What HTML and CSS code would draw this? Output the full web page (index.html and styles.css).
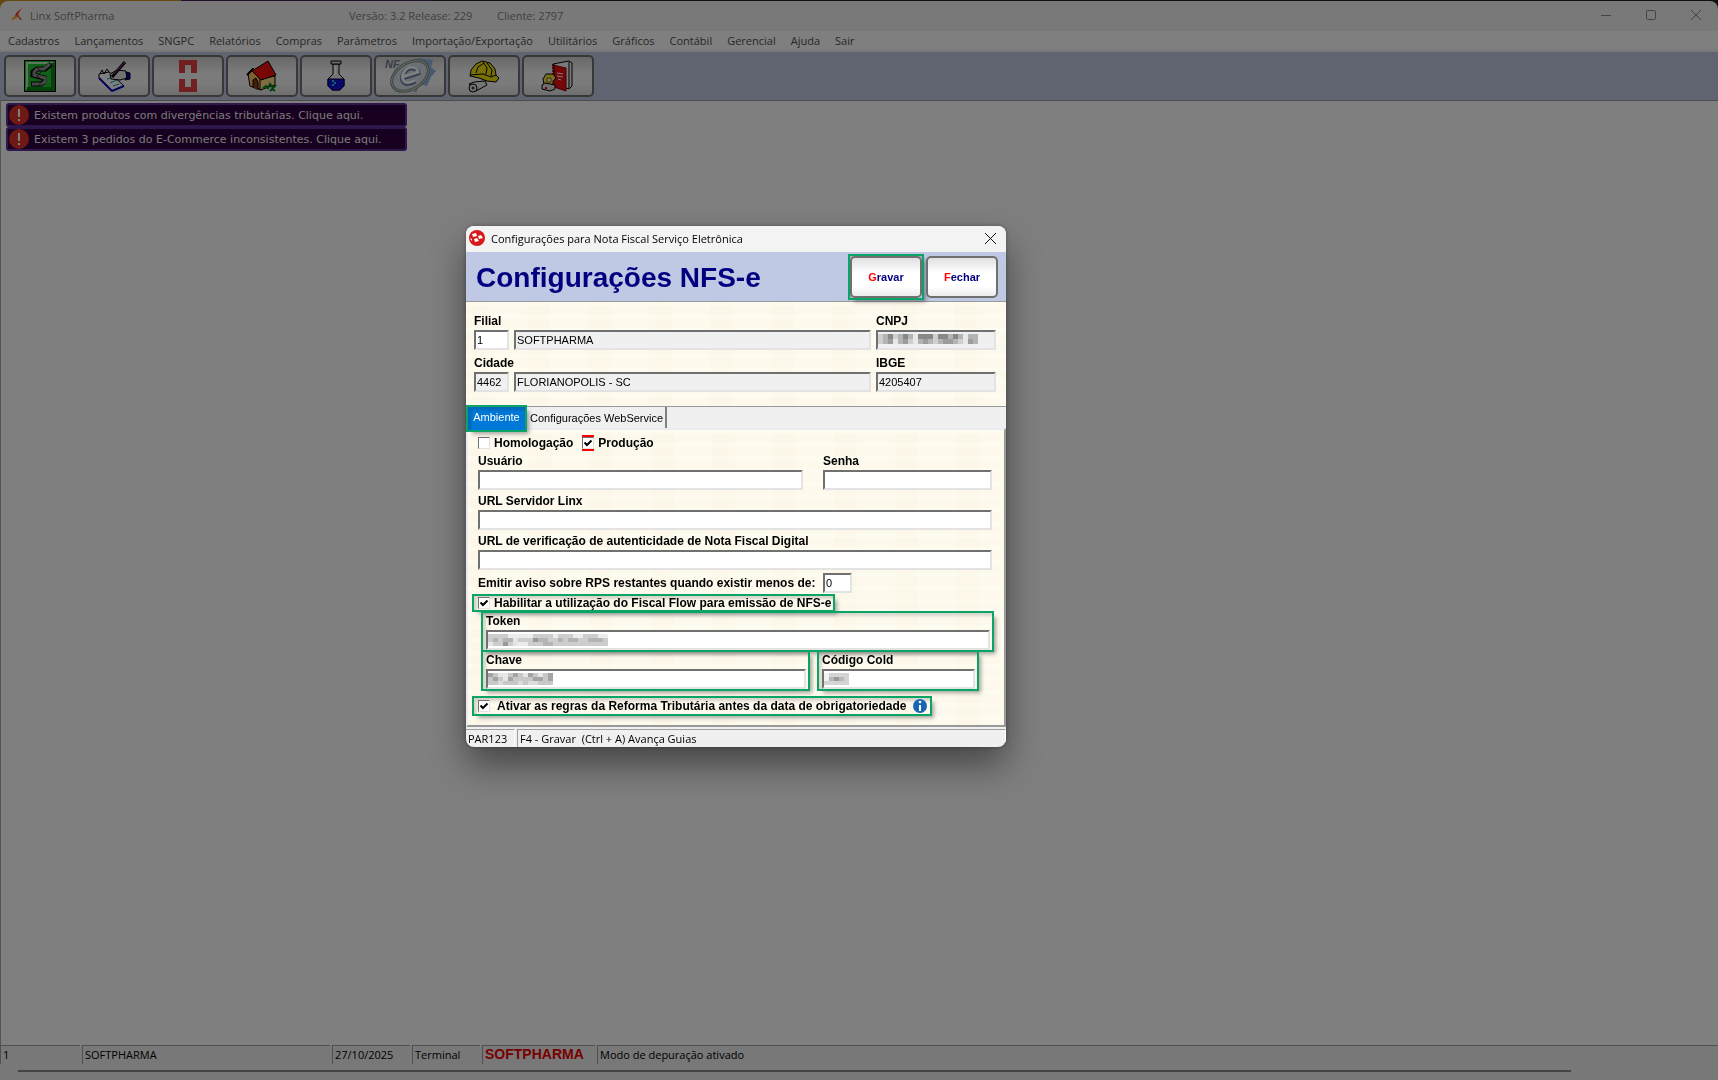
FILE: index.html
```html
<!DOCTYPE html>
<html lang="pt-BR">
<head>
    <meta charset="UTF-8">
    <meta name="viewport" content="width=device-width, initial-scale=1.0">
    <title>Linx SoftPharma</title>
    <link rel="stylesheet" href="styles.css">
</head>
<body>
<div class="app">
    <header class="titlebar">
        <svg class="app-logo" width="12" height="14" viewBox="0 0 12 14"><path d="M11 0L5 5L4 8L0 12L5 10L7 6Z" fill="#f03c14"/><path d="M5 8L7 9L9 12L11 12L8 8L7 5Z" fill="#f0601e"/><path d="M0 12L4 11L6 9L4 8Z" fill="#ffb020"/></svg>
        <span class="app-name">Linx SoftPharma</span>
        <span class="app-version">Versão: 3.2 Release: 229</span>
        <span class="app-client">Cliente: 2797</span>
        <div class="window-buttons">
            <button type="button" aria-label="Minimizar"><svg width="10" height="10" viewBox="0 0 10 10"><path d="M0 5.5H10"/></svg></button>
            <button type="button" aria-label="Maximizar"><svg width="10" height="10" viewBox="0 0 10 10"><rect x=".5" y=".5" width="9" height="9" rx="1"/></svg></button>
            <button type="button" aria-label="Fechar janela"><svg width="10" height="10" viewBox="0 0 10 10"><path d="M0 0L10 10M10 0L0 10"/></svg></button>
        </div>
    </header>

    <nav class="menu">
        <a href="#">Cadastros</a>
        <a href="#">Lançamentos</a>
        <a href="#">SNGPC</a>
        <a href="#">Relatórios</a>
        <a href="#">Compras</a>
        <a href="#">Parâmetros</a>
        <a href="#">Importação/Exportação</a>
        <a href="#">Utilitários</a>
        <a href="#">Gráficos</a>
        <a href="#">Contábil</a>
        <a href="#">Gerencial</a>
        <a href="#">Ajuda</a>
        <a href="#">Sair</a>
    </nav>

    <div class="toolbar">
        <button type="button" aria-label="SoftPharma">
            <svg width="32" height="32" viewBox="0 0 32 32"><rect x=".5" y=".5" width="31" height="31" fill="#20c030" stroke="#000"/><path d="M3 29V3H29" fill="none" stroke="#b8f0b8" stroke-width="2"/><path d="M29 3V29H3" fill="none" stroke="#108018" stroke-width="4"/><path d="M27 4L21 9H13L9 12V15L20 18V22L17 24H7" fill="none" stroke="#000" stroke-width="5"/><path d="M26 4L20 9H13L10 12V15L21 18V22L17 24H8" fill="none" stroke="#909090" stroke-width="3"/><path d="M13 7L17 12L13 16L18 20L15 26" fill="none" stroke="#303030"/></svg>
        </button>
        <button type="button" aria-label="Lançamentos">
            <svg width="34" height="32" viewBox="0 0 34 32"><path d="M2 14L12 12L27 26L15 31L2 18Z" fill="#fff" stroke="#000"/><path d="M2 18L15 31L27 26" fill="none" stroke="#0000b0" stroke-width="2"/><path d="M10 19L14 18M13 23L20 20M16 26L22 24" stroke="#00a0a0"/><path d="M3 14L5 10L7 14L10 9L13 13" fill="none" stroke="#000"/><path d="M13 14L20 10L29 11L30 18L23 20L14 19Z" fill="#e4e4e4" stroke="#000"/><path d="M29 12L33 13V19L28 20L30 17Z" fill="#0000b0" stroke="#000"/><path d="M15 17L28 2" stroke="#000" stroke-width="3"/><path d="M17 14L28 2" stroke="#c040c0"/></svg>
        </button>
        <button type="button" aria-label="SNGPC">
            <svg width="20" height="32" viewBox="0 0 20 32"><path d="M1 0H19V13H13V5H7V13H1Z" fill="#e04040"/><path d="M1 19H7V27H13V19H19V32H1Z" fill="#e04040"/></svg>
        </button>
        <button type="button" aria-label="Início">
            <svg width="32" height="32" viewBox="0 0 32 32"><path d="M2 14L7 8L16 19V30L4 26Z" fill="#ffc060" stroke="#000"/><path d="M14 19L29 16V25L14 30Z" fill="#ffd880" stroke="#000"/><path d="M6 11L22 1L30 15L15 20Z" fill="#f01010" stroke="#000"/><path d="M1 15L7 9" stroke="#000" stroke-width="2"/><path d="M7 28V20L10 18L12 22V30" fill="#804010" stroke="#000"/><path d="M17 28L20 26L22 28L24 24L27 28L30 25M24 31L26 29L29 31" fill="none" stroke="#008020" stroke-width="2"/></svg>
        </button>
        <button type="button" aria-label="Laboratório">
            <svg width="20" height="32" viewBox="0 0 20 32"><path d="M7 4V14L2 19V26L6 30H14L18 26V19L13 14V4Z" fill="#e8e8e8" stroke="#000"/><path d="M2 19H18V26L14 30H6L2 26Z" fill="#1010d0" stroke="#000040"/><path d="M5 1H15V4H5Z" fill="#d0d0d0" stroke="#000"/><path d="M9 6V15" stroke="#fff" stroke-width="2"/><path d="M6 20h2v2h-2zM8 22h2v2h-2zM6 24h2v2h-2z" fill="#30c0e0"/></svg>
        </button>
        <button type="button" aria-label="Nota fiscal eletrônica">
            <svg width="52" height="38" viewBox="0 0 52 38"><path d="M34 1L49 3L47 10L52 14L47 20L43 29L36 27L32 36L26 30L18 34L25 20Z" fill="#90b4e0"/><ellipse cx="26" cy="19" rx="20" ry="13" transform="rotate(-32 26 19)" fill="#d8e0ea" stroke="#788888" stroke-width="3"/><ellipse cx="26" cy="19" rx="20" ry="13" transform="rotate(-32 26 19)" fill="none" stroke="#c8d8c0"/><text x="1" y="11" class="nf-text">NF</text><path d="M18 21L34 16C33 10 24 9 20 16C16 24 21 30 31 24" fill="none" stroke="#7080a8" stroke-width="5"/><path d="M18 20L34 15C33 9 24 8 20 15C16 23 21 29 31 23" fill="none" stroke="#fff" stroke-width="3"/></svg>
        </button>
        <button type="button" aria-label="Obras">
            <svg width="34" height="33" viewBox="0 0 34 33"><path d="M3 16L4 10L9 4L15 1L23 3L28 9L29 15L32 18L29 22L20 21L12 18Z" fill="#f0e010" stroke="#000"/><path d="M3 15L16 14L24 17L29 15M9 13L11 7L17 3M19 14L20 8L16 2M24 16L25 10L20 3" fill="none" stroke="#000"/><path d="M2 24L7 22L18 21L20 25L9 31Z" fill="#e8e8e8" stroke="#000"/><circle cx="6" cy="28" r="4" fill="#e8e8e8" stroke="#000"/><circle cx="6" cy="28" r="1" fill="none" stroke="#000"/></svg>
        </button>
        <button type="button" aria-label="Agenda">
            <svg width="34" height="32" viewBox="0 0 34 32"><path d="M12 4L28 1L31 3V26L28 29L14 24Z" fill="#f4f4f4" stroke="#000"/><path d="M28 2V28" stroke="#000"/><path d="M12 5L25 8V31L13 27Z" fill="#e81010" stroke="#900"/><path d="M16 13L22 14M16 16L22 17M17 19L20 20" stroke="#fff"/><path d="M11 5H14M11 8H14M11 11H14M11 14H14" stroke="#000"/><path d="M2 19L5 14L12 14L15 18L12 21V26L3 24Z" fill="#f0e040" stroke="#000"/><path d="M1 25L4 23L14 25V29L9 31L1 29Z" fill="#ddd" stroke="#000"/><path d="M6 18H10V22H6Z" fill="#fff" stroke="#806000"/><path d="M4 28H6" stroke="#e00" stroke-width="2"/></svg>
        </button>
    </div>

    <main class="workspace">
        <a class="alert" href="#">
            <svg width="20" height="20" viewBox="0 0 20 20"><circle cx="10" cy="10" r="10" fill="#e03028"/><path d="M10 4V12M10 14V16" stroke="#fff" stroke-width="2"/></svg>
            Existem produtos com divergências tributárias. Clique aqui.
        </a>
        <a class="alert" href="#">
            <svg width="20" height="20" viewBox="0 0 20 20"><circle cx="10" cy="10" r="10" fill="#e03028"/><path d="M10 4V12M10 14V16" stroke="#fff" stroke-width="2"/></svg>
            Existem 3 pedidos do E-Commerce inconsistentes. Clique aqui.
        </a>
    </main>

    <footer class="app-status">
        <span>1</span>
        <span>SOFTPHARMA</span>
        <span>27/10/2025</span>
        <span>Terminal</span>
        <span class="brand">SOFTPHARMA</span>
        <span>Modo de depuração ativado</span>
    </footer>
    <div class="scrollbar"><div class="scroll-thumb"></div></div>
</div>

<div class="backdrop"></div>

<form class="dialog" role="dialog" aria-labelledby="dialog-title">
    <div class="dialog-bar">
        <svg width="16" height="16" viewBox="0 0 16 16"><circle cx="8" cy="8" r="8" fill="#d81818"/><path d="M3 4L7 3L8 6L4 7ZM9 6L12 5L14 8L10 9ZM5 9L8 8L10 11L6 12ZM1 8L3 9L3 11L2 10Z" fill="#fff"/></svg>
        <span id="dialog-title">Configurações para Nota Fiscal Serviço Eletrônica</span>
        <button type="button" class="dialog-close" aria-label="Fechar"><svg width="11" height="11" viewBox="0 0 11 11"><path d="M0 0L11 11M11 0L0 11"/></svg></button>
    </div>

    <div class="dialog-head">
        <h1>Configurações NFS-e</h1>
        <div class="action-frame marked"><button type="submit" class="action"><b>G</b>ravar</button></div>
        <button type="button" class="action"><b>F</b>echar</button>
    </div>

    <div class="branch paper">
        <div class="field">
            <label for="filial">Filial</label>
            <input type="text" id="filial" value="1">
        </div>
        <div class="field">
            <input type="text" aria-label="Nome da filial" value="SOFTPHARMA" readonly>
        </div>
        <div class="field">
            <label for="cnpj">CNPJ</label>
            <div class="masked">
                <input type="text" id="cnpj" readonly>
                <svg width="100" height="10" viewBox="0 0 20 2" shape-rendering="crispEdges">
                    <rect width="20" height="2" fill="#b4b4b4"/>
                    <path d="M2 .5h1M5 .5h1M8 .5h3M12 .5h2M15 .5h1" stroke="#888"/>
                    <path d="M2 1.5h1M5 1.5h1M9 1.5h1M13 1.5h2M18 1.5h1" stroke="#9c9c9c"/>
                    <path d="M0 .5h1M3 .5h1M11 .5h1M0 1.5h1M6 1.5h1M11 1.5h1M16 1.5h1" stroke="#cfcfcf"/>
                    <path d="M7 .5h1M17 .5h1M7 1.5h1M3 1.5h1M17 1.5h1" stroke="#e8e8e8"/>
                </svg>
            </div>
        </div>
        <div class="field">
            <label for="cidade">Cidade</label>
            <input type="text" id="cidade" value="4462" readonly>
        </div>
        <div class="field">
            <input type="text" aria-label="Nome da cidade" value="FLORIANOPOLIS - SC" readonly>
        </div>
        <div class="field">
            <label for="ibge">IBGE</label>
            <input type="text" id="ibge" value="4205407" readonly>
        </div>
    </div>

    <div class="tabs" role="tablist">
        <button type="button" role="tab" class="tab active marked" aria-selected="true">Ambiente</button>
        <button type="button" role="tab" class="tab" aria-selected="false">Configurações WebService</button>
    </div>

    <div class="panel paper">
        <div class="checks">
            <input type="checkbox" id="homologacao"><label for="homologacao">Homologação</label>
            <input type="checkbox" id="producao" class="required" checked><label for="producao">Produção</label>
        </div>
        <div class="login">
            <div class="field">
                <label for="usuario">Usuário</label>
                <input type="text" id="usuario">
            </div>
            <div class="field">
                <label for="senha">Senha</label>
                <input type="password" id="senha">
            </div>
        </div>
        <div class="field">
            <label for="url-linx">URL Servidor Linx</label>
            <input type="text" id="url-linx">
        </div>
        <div class="field">
            <label for="url-verif">URL de verificação de autenticidade de Nota Fiscal Digital</label>
            <input type="text" id="url-verif">
        </div>
        <div class="rps">
            <label for="rps">Emitir aviso sobre RPS restantes quando existir menos de:</label>
            <input type="text" id="rps" value="0">
        </div>
        <div class="checks option marked">
            <input type="checkbox" id="fiscal-flow" checked><label for="fiscal-flow">Habilitar a utilização do Fiscal Flow para emissão de NFS-e</label>
        </div>
        <div class="flow">
            <div class="field token marked">
                <label for="token">Token</label>
                <div class="masked">
                    <input type="text" id="token">
                    <svg width="120" height="12" viewBox="0 0 24 3" preserveAspectRatio="none" shape-rendering="crispEdges">
                        <rect width="24" height="3" fill="#cdcdcd"/>
                        <path d="M4 .5h5M13 .5h1M17 .5h2M22 .5h2M6 2.5h2" stroke="#ececec"/>
                        <path d="M1 1.5h1M3 1.5h2M9 1.5h3M14 1.5h1M16 1.5h2M20 1.5h3M3 2.5h1M11 2.5h2" stroke="#b4b4b4"/>
                        <path d="M3 2.5h1M9 1.5h1" stroke="#999"/>
                        <path d="M0 2.5h1M5 1.5h1M5 2.5h1" stroke="#e4e4e4"/>
                    </svg>
                </div>
            </div>
            <div class="field chave marked">
                <label for="chave">Chave</label>
                <div class="masked">
                    <input type="text" id="chave">
                    <svg width="65" height="12" viewBox="0 0 13 3" preserveAspectRatio="none" shape-rendering="crispEdges">
                        <rect width="13" height="3" fill="#c8c8c8"/>
                        <path d="M2 .5h2M7 .5h1M10 .5h1M3 1.5h1" stroke="#e6e6e6"/>
                        <path d="M0 .5h1M5 .5h1M8 .5h1M12 .5h1M1 1.5h1M4 1.5h1M9 1.5h2M12 1.5h1" stroke="#a4a4a4"/>
                        <path d="M2 2.5h1M6 2.5h1M8 2.5h2" stroke="#dcdcdc"/>
                    </svg>
                </div>
            </div>
            <div class="field codigo marked">
                <label for="codigo">Código Cold</label>
                <div class="masked">
                    <input type="text" id="codigo">
                    <svg width="25" height="12" viewBox="0 0 5 3" preserveAspectRatio="none" shape-rendering="crispEdges">
                        <rect width="5" height="3" fill="#d4d4d4"/>
                        <path d="M0 .5h1M0 1.5h1" stroke="#f2f2f2"/>
                        <path d="M1 1.5h1M3 1.5h1" stroke="#b8b8b8"/>
                        <path d="M2 1.5h1" stroke="#999"/>
                    </svg>
                </div>
            </div>
        </div>
        <div class="checks option reform marked">
            <input type="checkbox" id="reforma" checked><label for="reforma">Ativar as regras da Reforma Tributária antes da data de obrigatoriedade</label>
            <svg width="14" height="14" viewBox="0 0 14 14"><circle cx="7" cy="7" r="7" fill="#1767b5"/><path d="M7 6V12" stroke="#fff" stroke-width="2"/><circle cx="7" cy="3" r="1.3" fill="#fff"/></svg>
        </div>
    </div>

    <div class="dialog-status">
        <span>PAR123</span>
        <span>F4 - Gravar &nbsp;(Ctrl + A) Avança Guias</span>
    </div>
</form>
</body>
</html>
```

FILE: styles.css
```css
* {
    box-sizing: border-box;
}
body {
    margin: 0;
    font-family: "Open Sans", "Noto Sans", sans-serif;
    font-size: 11px;
    color: #000;
    background: linear-gradient(to right, #c8901c 181px, #40205c 181px, #40205c 430px, #202024 430px);
}
button,
input {
    font: inherit;
    color: inherit;
    margin: 0;
}
svg {
    display: block;
    flex: none;
}

/* Main window */
.app {
    display: flex;
    flex-direction: column;
    height: 100vh;
    padding-top: 1px;
}
.titlebar {
    display: flex;
    align-items: center;
    height: 30px;
    padding: 0 0 2px 11px;
    background: #f3f3f3;
    color: #808080;
    border-radius: 8px 8px 0 0;
}
.app-name {
    width: 326px;
    padding-left: 7px;
}
.app-version {
    width: 148px;
}
.window-buttons {
    display: flex;
    margin-left: auto;
}
.window-buttons button {
    display: flex;
    justify-content: center;
    align-items: center;
    width: 45px;
    height: 28px;
    border: 0;
    padding: 0;
    background: none;
}
.window-buttons path,
.window-buttons rect,
.dialog-close path {
    fill: none;
    stroke: #888;
}
.menu {
    display: flex;
    gap: 15px;
    align-items: center;
    height: 21px;
    padding-left: 8px;
    background: #fff;
    border-bottom: 2px solid #f0f0f0;
}
.menu a {
    color: #505050;
    text-decoration: none;
}
.toolbar {
    display: flex;
    gap: 2px;
    height: 49px;
    padding: 3px 4px;
    background: #c0c9e3;
    border-bottom: 1px solid #999;
}
.toolbar button {
    display: flex;
    justify-content: center;
    align-items: center;
    width: 72px;
    height: 42px;
    padding: 0;
    border: 2px solid #707070;
    border-radius: 5px;
    background: linear-gradient(#d0d0d0, #f6f6f6 40%, #f6f6f6 70%, #dedede);
}
.nf-text {
    font: italic bold 11px "Liberation Sans", Arial, sans-serif;
    fill: #707898;
}
.workspace {
    flex: 1;
    padding: 2px 5px;
    background: #fff;
    border-left: 1px solid #aaa;
}
.alert {
    display: flex;
    align-items: center;
    gap: 5px;
    width: 401px;
    height: 24px;
    padding-left: 1px;
    border: 2px solid #5a2e96;
    border-radius: 3px;
    background: #300040;
    color: #f0f0f0;
    font-family: "DejaVu Sans", Verdana, sans-serif;
    text-decoration: none;
}
.app-status {
    display: grid;
    grid-template-columns: 80px 248px 78px 68px 113px 1fr;
    gap: 2px;
    height: 19px;
    background: #f0f0f0;
}
.app-status span {
    padding-left: 2px;
    line-height: 17px;
    border-top: 1px solid #a0a0a0;
    border-left: 1px solid #a0a0a0;
}
.app-status .brand {
    color: #f00000;
    font: bold 14px/17px "Liberation Sans", Arial, sans-serif;
}
.scrollbar {
    height: 16px;
    padding: 6px 147px 0 18px;
    background: #f0f0f0;
}
.scroll-thumb {
    height: 2px;
    background: #868686;
}
.backdrop {
    position: fixed;
    inset: 0;
    background: rgba(0, 0, 0, 0.5);
}

/* Dialog */
.dialog {
    position: absolute;
    top: 226px;
    left: 466px;
    width: 540px;
    overflow: hidden;
    border-radius: 8px;
    background: #f0f0f0;
    box-shadow: 0 18px 36px rgba(0, 0, 0, 0.45), 0 0 4px rgba(0, 0, 0, 0.3);
    font: 11px "Liberation Sans", Arial, sans-serif;
}
.dialog-bar {
    display: flex;
    align-items: center;
    gap: 6px;
    height: 26px;
    padding: 0 10px 2px 3px;
    background: #f3f3f3;
    font-family: "Open Sans", "Noto Sans", sans-serif;
}
.dialog-close {
    margin-left: auto;
    padding: 0;
    border: 0;
    background: none;
}
.dialog-close path {
    stroke: #111;
}
.dialog-head {
    display: flex;
    align-items: center;
    gap: 4px;
    height: 50px;
    padding: 0 8px 0 10px;
    background: #c0c9e3;
    border-bottom: 1px solid #999;
}
.dialog-head h1 {
    flex: 1;
    margin: 0;
    padding-top: 3px;
    color: #000080;
    font-size: 28px;
}
.action {
    display: block;
    width: 72px;
    height: 42px;
    padding: 0;
    border: 2px solid #707070;
    border-radius: 5px;
    background: linear-gradient(#e0e0e0, #fff 40%, #fff 75%, #ececec);
    color: #000080;
    font-weight: bold;
}
.action b {
    color: #f00;
}
.paper {
    background-color: #fdf9ec;
    background-image:
        repeating-linear-gradient(90deg, rgba(240, 228, 196, 0.08) 0 23px, transparent 23px 61px),
        repeating-linear-gradient(rgba(255, 255, 245, 0.5) 0 4px, transparent 4px 13px);
}

/* Green frame round the controls to fill in */
.marked {
    outline: 2px solid #0aa566;
    box-shadow: 4px 4px 4px rgba(0, 0, 0, 0.35), inset 3px 3px 3px rgba(0, 0, 0, 0.15);
}
.branch {
    display: grid;
    grid-template-columns: 35px 1fr 120px;
    gap: 5px;
    align-items: end;
    padding: 11px 10px 14px 8px;
}
.field {
    display: flex;
    flex-direction: column;
}
label {
    font-size: 12px;
    font-weight: bold;
    line-height: 17px;
    white-space: nowrap;
}
input[type="text"],
input[type="password"] {
    width: 100%;
    height: 20px;
    padding: 0 0 1px 1px;
    border: 2px solid;
    border-color: #707070 #e3e3e3 #e3e3e3 #707070;
    border-radius: 0;
    background: #fff;
}
input[type="text"][readonly] {
    background: #f0f0f0;
}
.masked {
    position: relative;
}
.masked svg {
    position: absolute;
    top: 4px;
    left: 2px;
}
.tabs {
    display: flex;
    height: 22px;
    border-top: 1px solid #999;
    background: #f0f0f0;
}
.tab {
    height: 21px;
    padding: 0 2px;
    border: 0;
    border-right: 2px solid #808080;
    background: none;
}
.tab.active {
    width: 57px;
    height: 23px;
    margin: 0 3px 0 2px;
    padding: 0 0 4px;
    border: 0;
    background: #0078d7;
    color: #fff;
    z-index: 1;
}
.panel {
    display: flex;
    flex-direction: column;
    gap: 3px;
    padding: 6px 10px 11px;
    border: 2px solid #ececf2;
    border-right-color: #999;
    border-bottom-color: #999;
}
.checks {
    display: flex;
    align-items: center;
    gap: 4px;
    height: 14px;
}
.checks label {
    line-height: 14px;
    margin-right: 5px;
}
input[type="checkbox"] {
    appearance: none;
    width: 12px;
    height: 12px;
    border: 1px solid;
    border-color: #707070 #e3e3e3 #e3e3e3 #707070;
    background: #fff;
}
input[type="checkbox"]:checked {
    background: #fff url("data:image/svg+xml,%3Csvg xmlns='http://www.w3.org/2000/svg' viewBox='0 0 10 10'%3E%3Cpath d='M1.5 4.5L4 7L8.5 2.5' fill='none' stroke='black' stroke-width='2'/%3E%3C/svg%3E");
}
input.required {
    box-shadow: 0 -2px 0 #f00, 0 2px 0 #f00;
}
.login {
    display: grid;
    grid-template-columns: 325px 1fr;
    gap: 20px;
}
.panel > .login,
.panel > .field {
    padding-right: 2px;
}
.rps {
    display: grid;
    grid-template-columns: 345px 29px;
    align-items: center;
}
.option {
    align-self: flex-start;
    margin-left: -4px;
    padding-left: 4px;
}
.option label {
    margin-right: 2px;
}
.flow {
    display: grid;
    grid-template-columns: 325px 158px 1fr;
    gap: 2px 11px;
    margin: 0 2px 0 5px;
}
.flow .field {
    padding: 0 2px 0 3px;
}
.token {
    grid-column: 1 / -1;
}
.reform {
    height: 16px;
    margin-top: 6px;
    padding-right: 3px;
}
.reform label {
    margin-left: 3px;
    margin-right: 3px;
}
.dialog-status {
    display: flex;
    gap: 2px;
    height: 20px;
    padding-top: 2px;
    font: 11px "Open Sans", "Noto Sans", sans-serif;
}
.dialog-status span {
    width: 49px;
    padding-left: 2px;
    line-height: 17px;
    border-top: 1px solid #a0a0a0;
    border-right: 1px solid #fff;
}
.dialog-status span:last-child {
    flex: 1;
    border-left: 1px solid #a0a0a0;
}
```
